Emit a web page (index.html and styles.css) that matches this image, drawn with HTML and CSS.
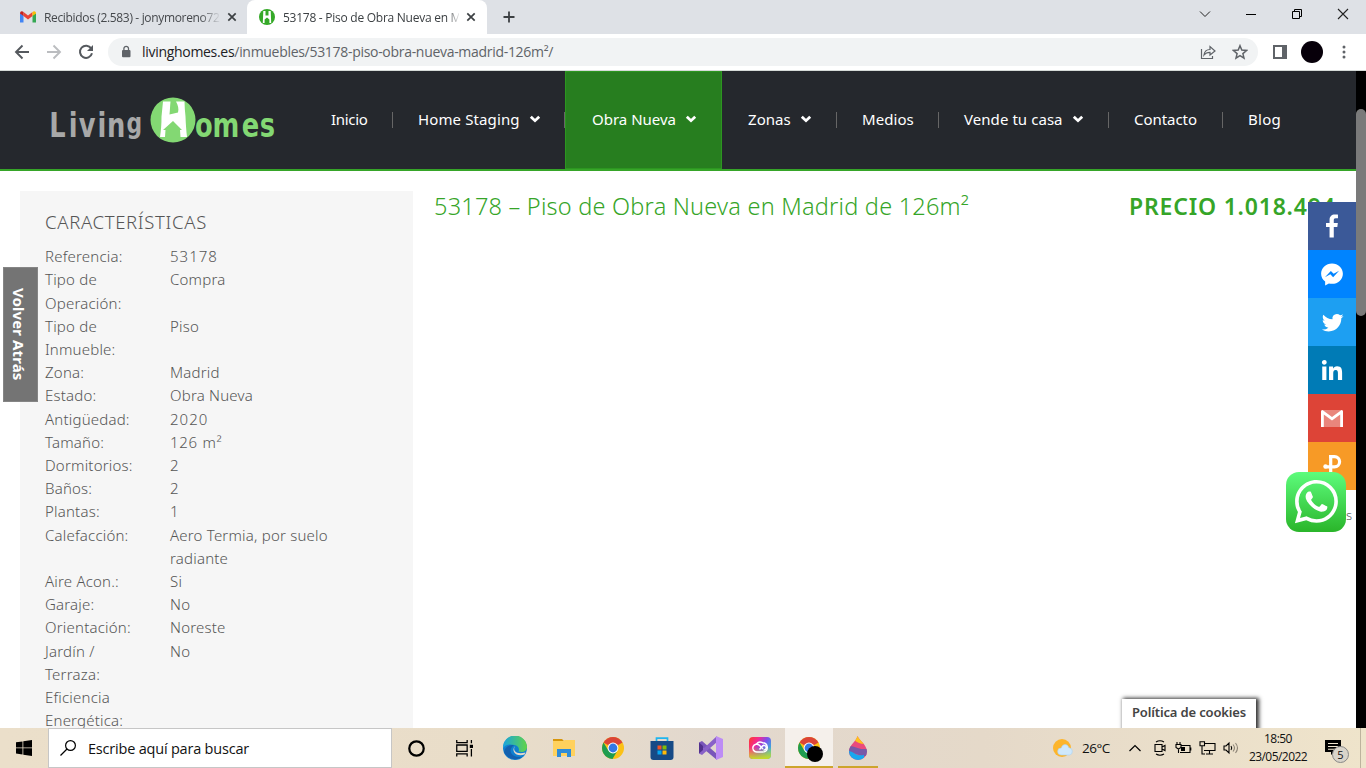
FILE: index.html
```html
<!DOCTYPE html>
<html lang="es">
<head>
<meta charset="utf-8">
<title>53178 - Piso de Obra Nueva en Madrid</title>
<link rel="stylesheet" href="styles.css">
</head>
<body>
<svg width="0" height="0" class="defs">
  <defs>
    <symbol id="x" viewBox="0 0 10 10"><path d="M1.3 1.3 8.7 8.7M8.7 1.3 1.3 8.7" stroke="#3c4043" stroke-width="1.7"/></symbol>
    <symbol id="caret" viewBox="0 0 12 8"><path d="M1.8 1.8 6 5.700l4.200-3.900" fill="none" stroke="#fff" stroke-width="2.8"/></symbol>
    <symbol id="chrome" viewBox="0 0 24 24">
      <circle cx="12" cy="12" r="11" fill="#fbc116"/>
      <path d="M12 12 2.500 6.500A11 11 0 0 1 21.500 6.500Z" fill="#db4437"/>
      <path d="M2.500 6.500A11 11 0 0 0 11.500 23L16.500 14.500 12 12 7.300 14.500Z" fill="#1e9c50"/>
      <circle cx="12" cy="12" r="5.400" fill="#fff"/><circle cx="12" cy="12" r="4.400" fill="#3478e5"/>
    </symbol>
  </defs>
</svg>
<header class="tabs">
  <div class="tab mail">
    <svg class="fav" viewBox="0 0 16 12"><path d="M0 2v9.500h3.500V4.600Z" fill="#4285f4"/><path d="M12.500 4.600v6.900H16V2Z" fill="#34a853"/><path d="M3.500 1v4L8 8.500 12.500 5V1L8 4.500Z" fill="#ea4335"/><path d="M0 2.500V1.500Q1.500-.5 3.500 1v4Z" fill="#c5221f"/><path d="M16 2.500v-1Q14.500-.5 12.500 1v4Z" fill="#fbbc04"/></svg>
    <span class="title">Recibidos (2.583) - jonymoreno72</span>
    <svg class="close"><use href="#x"/></svg>
  </div>
  <div class="tab current">
    <svg class="fav home" viewBox="0 0 16 16"><circle cx="8" cy="8" r="8" fill="#35a928"/><path d="M4.300 2h2.200v4.500h3V2h2.200l.5 12H10.400V10.500L8 8.500 5.600 10.500V14H3.800Z" fill="#fff"/></svg>
    <span class="title">53178 - Piso de Obra Nueva en M</span>
    <svg class="close"><use href="#x"/></svg>
  </div>
  <svg class="plus" viewBox="0 0 12 12"><path d="M6 .5v11M.5 6h11" stroke="#3c4043" stroke-width="1.800"/></svg>
  <div class="winctl">
    <svg viewBox="0 0 12 12"><path d="M1 3.500 6 8.500l5-5" fill="none" stroke="#222"/></svg>
    <svg viewBox="0 0 12 12"><path d="M1 6.500h10" stroke="#000"/></svg>
    <svg viewBox="0 0 12 12"><path d="M1.500 3.500h7v7h-7ZM3.500 3.500v-2h7v7h-2" fill="none" stroke="#000"/></svg>
    <svg viewBox="0 0 12 12"><path d="m1 1 10 10M11 1 1 11" stroke="#222" stroke-width="1.100"/></svg>
  </div>
</header>
<div class="toolbar">
  <svg class="tool" viewBox="0 0 16 16"><path d="M15 8H2.500M8.500 1.500 2 8l6.500 6.500" fill="none" stroke="#55595e" stroke-width="1.900"/></svg>
  <svg class="tool" viewBox="0 0 16 16"><path d="M1 8h12.500M7.500 1.500 14 8l-6.500 6.500" fill="none" stroke="#bbbdc0" stroke-width="1.900"/></svg>
  <svg class="tool" viewBox="0 0 16 16"><path d="M13.200 4.400A6.100 6.100 0 1 0 14 9.300" fill="none" stroke="#55595e" stroke-width="2"/><path d="M15 1v6H9Z" fill="#55595e"/></svg>
  <div class="address">
    <svg class="lock" viewBox="0 0 10 13"><rect x="1" y="5" width="8.500" height="7.300" rx="1" fill="#5f6368"/><path d="M2.900 5V3.600a2.300 2.300 0 0 1 4.600 0V5" fill="none" stroke="#5f6368" stroke-width="1.300"/></svg>
    <span class="url"><b>livinghomes.es</b>/inmuebles/53178-piso-obra-nueva-madrid-126m²/</span>
    <svg class="share" viewBox="0 0 16 16"><path d="M1.500 5v9.500h11V12M4 11c.5-4 3-5.500 6-5.500V2.500l5 4.500-5 4V8.300C7.500 8.300 5.500 9 4 11Z" fill="none" stroke="#5f6368" stroke-width="1.200"/></svg>
    <svg class="star" viewBox="0 0 16 16"><path d="m8 1.700 1.800 4.400 4.700.4-3.600 3.100 1.100 4.600L8 11.700l-4 2.500 1.100-4.600L1.500 6.500l4.700-.4Z" fill="none" stroke="#5f6368" stroke-width="1.500"/></svg>
  </div>
  <svg class="panel" viewBox="0 0 14 14"><path d="M1 1h12v12H1Z" fill="#fff" stroke="#5f6368" stroke-width="2"/><path d="M9 0h5v14H9Z" fill="#5f6368"/></svg>
  <i class="avatar"></i>
  <svg class="dots" viewBox="0 0 4 14"><g fill="#5f6368"><circle cx="2" cy="2" r="1.500"/><circle cx="2" cy="7" r="1.500"/><circle cx="2" cy="12" r="1.500"/></g></svg>
</div>
<div class="view">
  <div class="page">
    <div class="masthead">
      <svg class="logo" viewBox="0 0 230 50">
        <text class="word grey" transform="translate(0 42) scale(.78 1)" x="-1 24 37 61 73 98">Livin<tspan dy="-4" class="gee">g</tspan></text>
        <circle cx="123" cy="25" r="22.500" fill="#83d873"/>
        <path d="M113 6.500h7.500c-.5 5-.5 8-1 13l8.500-2c1-4 0-7-2-11h8.500c0 5 .5 10 1 15 .3 8 .8 14 1.500 20.500h-6.500l-.5-7h2L123 26l-10 9h2.500l-.5 7H110c1-6.500 1.500-12.500 1.500-20.500Z" fill="#fff"/>
        <text class="word green" transform="translate(145 42) scale(.78 1)" x="0 22.500 60 83">omes</text>
      </svg>
      <nav>
        <a class="n1"><span>Inicio</span></a>
        <a class="n2"><span>Home Staging</span><svg><use href="#caret"/></svg></a>
        <a class="n3 active"><span>Obra Nueva</span><svg><use href="#caret"/></svg></a>
        <a class="n4"><span>Zonas</span><svg><use href="#caret"/></svg></a>
        <a class="n5"><span>Medios</span></a>
        <a class="n6"><span>Vende tu casa</span><svg><use href="#caret"/></svg></a>
        <a class="n7"><span>Contacto</span></a>
        <a class="n8"><span>Blog</span></a>
      </nav>
    </div>
    <main>
      <aside>
        <h2>CARACTERÍSTICAS</h2>
        <dl>
          <dt>Referencia:</dt><dd class="num">53178</dd>
          <dt>Tipo de<br>Operación:</dt><dd>Compra</dd>
          <dt>Tipo de<br>Inmueble:</dt><dd>Piso</dd>
          <dt>Zona:</dt><dd>Madrid</dd>
          <dt>Estado:</dt><dd>Obra Nueva</dd>
          <dt>Antigüedad:</dt><dd class="num">2020</dd>
          <dt>Tamaño:</dt><dd class="size">126 m²</dd>
          <dt>Dormitorios:</dt><dd>2</dd>
          <dt>Baños:</dt><dd>2</dd>
          <dt>Plantas:</dt><dd>1</dd>
          <dt>Calefacción:</dt><dd>Aero Termia, por suelo<br>radiante</dd>
          <dt>Aire Acon.:</dt><dd>Si</dd>
          <dt>Garaje:</dt><dd>No</dd>
          <dt>Orientación:</dt><dd>Noreste</dd>
          <dt>Jardín /<br>Terraza:</dt><dd>No</dd>
          <dt>Eficiencia<br>Energética:</dt><dd></dd>
        </dl>
      </aside>
      <h1>53178 – Piso de Obra Nueva en Madrid de 126m²</h1>
      <strong class="price">PRECIO 1.018.494</strong>
    </main>
    <div class="back">Volver Atrás</div>
    <div class="social">
      <svg class="fb" viewBox="0 0 32 32"><path d="M17.780 27.500V17.008h3.522l.527-4.090h-4.050v-2.610c0-1.182.33-1.990 2.023-1.990h2.166V4.660c-.375-.05-1.660-.16-3.155-.16-3.123 0-5.260 1.905-5.260 5.405v3.016h-3.530v4.090h3.530V27.500h4.223z"/></svg>
      <svg class="ms" viewBox="0 .5 32 32"><path transform="translate(0 1)" d="M16 5C9.986 5 5.110 9.560 5.110 15.182c0 3.200 1.580 6.054 4.046 7.920V27l3.716-2.060c.99.276 2.040.425 3.128.425 6.014 0 10.890-4.560 10.890-10.183S22.013 5 16 5zm1.147 13.655L14.330 15.730l-5.423 3 5.946-6.310 2.816 2.925 5.420-3-5.946 6.310z"/></svg>
      <svg class="tw" viewBox="-2.500 -2.500 35.500 35.500"><path d="M28 8.557a9.913 9.913 0 0 1-2.828.775 4.930 4.930 0 0 0 2.166-2.725 9.738 9.738 0 0 1-3.130 1.194 4.920 4.920 0 0 0-3.593-1.550 4.924 4.924 0 0 0-4.794 6.049c-4.090-.21-7.720-2.170-10.150-5.150a4.942 4.942 0 0 0-.665 2.477c0 1.710.87 3.214 2.190 4.100a4.968 4.968 0 0 1-2.230-.616v.06c0 2.390 1.700 4.380 3.952 4.830-.414.115-.85.174-1.297.174-.318 0-.626-.03-.928-.086a4.935 4.935 0 0 0 4.600 3.420 9.893 9.893 0 0 1-6.114 2.107c-.398 0-.79-.023-1.175-.068a13.953 13.953 0 0 0 7.550 2.213c9.056 0 14.010-7.507 14.010-14.013 0-.213-.005-.426-.015-.637.96-.695 1.795-1.560 2.455-2.550z"/></svg>
      <svg class="li" viewBox="0 0 32 32"><path d="M6.227 12.610h4.190v13.480h-4.190V12.610zm2.095-6.700a2.430 2.430 0 0 1 0 4.860c-1.344 0-2.428-1.090-2.428-2.430s1.084-2.430 2.428-2.430m4.720 6.700h4.020v1.840h.058c.56-1.058 1.927-2.176 3.965-2.176 4.238 0 5.020 2.792 5.020 6.420v7.395h-4.183v-6.560c0-1.564-.03-3.574-2.178-3.574-2.180 0-2.514 1.700-2.514 3.460v6.668h-4.187V12.610z"/></svg>
      <svg class="gm" viewBox="0 0 32 32"><path d="M5.500 8h21v17h-21Z" opacity=".35"/><path d="M5 9.500Q5 8 6.500 8L16 15 25.500 8Q27 8 27 9.500V25h-2.800V12.500L16 18.500 7.800 12.500V25H5Z"/></svg>
      <svg class="pf" viewBox="0 0 32 32"><path d="M13 6.600h5.500a5 5 0 0 1 0 10.200H8.500M14.700 6v16" fill="none" stroke="#fff" stroke-width="3.200"/><circle cx="9.500" cy="16.400" r="2.200"/></svg>
    </div>
    <span class="tail">s</span>
    <svg class="whats" viewBox="0 0 60 60">
      <defs><linearGradient id="wg" x2="0" y2="1"><stop stop-color="#5dfc7c"/><stop offset="1" stop-color="#2ab52a"/></linearGradient></defs>
      <rect width="60" height="60" rx="13" fill="url(#wg)"/>
      <path transform="translate(8.800 8) scale(1.800)" fill="#fff" d="M17.472 14.382c-.297-.149-1.758-.867-2.030-.967-.273-.099-.471-.148-.67.15-.197.297-.767.966-.94 1.164-.173.199-.347.223-.644.075-.297-.15-1.255-.463-2.390-1.475-.883-.788-1.480-1.761-1.653-2.059-.173-.297-.018-.458.13-.606.134-.133.298-.347.446-.52.149-.174.198-.298.298-.497.099-.198.05-.371-.025-.52-.075-.149-.669-1.612-.916-2.207-.242-.579-.487-.5-.669-.51-.173-.008-.371-.01-.57-.01-.198 0-.52.074-.792.372-.272.297-1.040 1.016-1.040 2.479 0 1.462 1.065 2.875 1.213 3.074.149.198 2.096 3.200 5.077 4.487.709.306 1.262.489 1.694.625.712.227 1.360.195 1.871.118.571-.085 1.758-.719 2.006-1.413.248-.694.248-1.289.173-1.413-.074-.124-.272-.198-.57-.347m-5.421 7.403h-.004a9.870 9.870 0 01-5.031-1.378l-.361-.214-3.741.982.998-3.648-.235-.374a9.860 9.860 0 01-1.510-5.260c.001-5.450 4.436-9.884 9.888-9.884 2.640 0 5.122 1.030 6.988 2.898a9.825 9.825 0 012.893 6.994c-.003 5.450-4.437 9.884-9.885 9.884m8.413-18.297A11.815 11.815 0 0012.050 0C5.495 0 .16 5.335.157 11.892c0 2.096.547 4.142 1.588 5.945L.057 24l6.305-1.654a11.882 11.882 0 005.683 1.448h.005c6.554 0 11.890-5.335 11.893-11.893a11.821 11.821 0 00-3.480-8.413z"/>
    </svg>
    <div class="cookies">Política de cookies</div>
  </div>
  <div class="scroll"><i></i></div>
</div>
<footer class="taskbar">
  <div class="start"><svg viewBox="0 0 16 16"><path d="M0 2.300 6.500 1.400v6.100H0ZM7.300 1.200 16 0v7.500H7.300ZM0 8.300h6.500v6.200L0 13.600ZM7.300 8.300H16V16l-8.700-1.300Z"/></svg></div>
  <div class="search"><svg viewBox="0 0 16 16"><g fill="none" stroke="#000" stroke-width="1.200"><circle cx="10.500" cy="5.500" r="4.900"/><path d="M7 9 .5 15.500"/></g></svg><span>Escribe aquí para buscar</span></div>
  <div class="cell"><svg class="s16" viewBox="0 0 16 16"><circle cx="8" cy="8" r="6.800" fill="none" stroke="#000" stroke-width="2.100"/></svg></div>
  <div class="cell"><svg class="s16" viewBox="0 0 16 16"><path d="M.7 0v2.500h9.800V0M.7 15.500V13h9.800v2.500M.7 4.700h9.800v6H.7ZM14.500 0v3M14.500 8.500v7" fill="none" stroke="#000" stroke-width="1.200"/><path d="M13 4.500h3v3h-3Z"/></svg></div>
  <div class="cell app first"><svg viewBox="0 0 24 24">
    <defs><linearGradient id="eg" x1="0" x2="1"><stop stop-color="#18a3df"/><stop offset="1" stop-color="#61d447"/></linearGradient></defs>
    <circle cx="12" cy="12" r="12" fill="#0f7fd0"/><path d="M0 12A12 12 0 0 1 24 11c0 4-4 6-8.500 4.500 1.500-3.500-1-6-4-6.500C6 7.500 2 9 0 12Z" fill="url(#eg)"/><path d="M9 11c-4 5 1 11 10 10A12 12 0 0 1 1 16c1-5 4-7 10-7Z" fill="#1360ae"/><path d="M12 10c-3 5 2 9 10.500 6.500L21.500 18.500c-8 3-14-3.500-9.500-8.500Z" fill="#e5dacb"/></svg></div>
  <div class="cell app"><svg viewBox="0 0 24 24"><path d="M1 3h9l2 2H1Z" fill="#d7960b"/><path d="M1 5h10l2-1h10v16H1Z" fill="#ffd15d"/><path d="M5 21v-8h14v8h-4v-4H9v4Z" fill="#2f8cd8"/></svg></div>
  <div class="cell app"><svg viewBox="0 0 24 24"><use href="#chrome"/></svg></div>
  <div class="cell app"><svg viewBox="0 0 24 24"><path d="M6.500 7V2.200h11V7" fill="none" stroke="#1fb5ee" stroke-width="1.700"/><path d="M.5 5h23v16q0 3-3 3h-17q-3 0-3-3Z" fill="#164a86"/><path d="M7.500 9.500h4v4h-4Z" fill="#f35325"/><path d="M12.500 9.500h4v4h-4Z" fill="#81bc06"/><path d="M7.500 14.500h4v4h-4Z" fill="#05a6f0"/><path d="M12.500 14.500h4v4h-4Z" fill="#ffba08"/></svg></div>
  <div class="cell app"><svg viewBox="0 0 24 24"><path d="M0 6.500 3 5l15 13v6L0 9Z" fill="#7956ba"/><path d="M0 6.500v11L3 19 18 6V0L4.500 12.500Z" fill="#8961c8"/><path d="M0 6.500v11L4 14V10Z" fill="#52318e"/><path d="m17 0 7 3v18l-7 3Z" fill="#bd8cf5"/></svg></div>
  <div class="cell app"><svg viewBox="0 0 24 24"><defs><linearGradient id="cc" x2="1" y2=".6"><stop stop-color="#ff3c26"/><stop offset=".35" stop-color="#f32992"/><stop offset=".65" stop-color="#7950ef"/><stop offset="1" stop-color="#30bdd5"/></linearGradient><linearGradient id="cb" x2="0" y2="1"><stop offset=".45" stop-color="#ffd200" stop-opacity="0"/><stop offset="1" stop-color="#c6dc24"/></linearGradient></defs><rect x="1" y="1" width="22" height="22" rx="4" fill="url(#cc)"/><rect x="1" y="1" width="22" height="22" rx="4" fill="url(#cb)"/><g fill="none" stroke="#fff" stroke-width="1.500"><path d="M15.500 16H8.700a3.900 3.900 0 1 1 2.700-6.700L15 13"/><path d="M8.500 8A4.600 4.600 0 0 1 14.500 6.700a4.700 4.700 0 0 1 1 9.300"/><path d="M11.500 13.500 14 10.500a2.300 2.300 0 1 1 1.500 3.500"/></g></svg></div>
  <div class="cell run lit"><svg viewBox="0 0 24 24"><use href="#chrome"/></svg><i></i></div>
  <div class="cell run drop"><svg viewBox="0 0 24 24"><defs><clipPath id="dp"><path d="M11.500 0C13 4 21 9 21 15.500a9 8.500 0 0 1-18 0C3 9 10 6 11.500 0Z"/></clipPath></defs><g clip-path="url(#dp)"><path d="M0 0h24v24H0Z" fill="#ea4b7d"/><path d="M8 0h10v8q-5 0-10-4Z" fill="#ffc21a"/><path d="M0 11c8-4 11 5 24 1v8c-12 2-12-5-24-2Z" fill="#7859a8"/><path d="M0 15c8-1 9 6 18 4v6H0Z" fill="#16a8ef"/></g></svg></div>
  <div class="tray">
    <svg class="weather" viewBox="0 0 20 20"><circle cx="9" cy="10" r="9" fill="#fdb52b"/><path d="M8 17a3.500 3.500 0 0 1 .3-7c1-4.500 6.500-4.500 7.500-.3A3.700 3.700 0 0 1 16.500 17Z" fill="#cfe8fb" stroke="#a9d2f3" stroke-width=".6"/></svg>
    <span class="temp">26°C</span>
    <svg class="chev" viewBox="0 0 12 8"><path d="m.5 7 5.500-5.500L11.500 7" fill="none" stroke="#000" stroke-width="1.200"/></svg>
    <svg class="i1" viewBox="0 0 12 16"><g fill="none" stroke="#000" stroke-width="1.100"><path d="M2 2Q6-.5 10 2M2 14q4 2.500 8 0M1 4.500h7v7H1ZM8 7l3-1.500v5L8 9"/></g></svg>
    <svg class="i2" viewBox="0 0 17 12"><g fill="none" stroke="#000" stroke-width="1.100"><path d="M6 3.500h9v7H5M1 2.500h5v3L3.500 7 1 5.500ZM2 0v2.500M5 0v2.500M3.500 7v4M15.800 5.500v3"/></g><path d="M6 5h4v4H6Z"/></svg>
    <svg class="i3" viewBox="0 0 17 14"><path d="M5 2.500h11v7H5M10.500 9.500V13M7 13h7M1 .7h4.500v4H1ZM3 4.700V13h3" fill="none" stroke="#000" stroke-width="1.100"/></svg>
    <svg class="i4" viewBox="0 0 17 14"><g fill="none" stroke="#000" stroke-width="1.100"><path d="M1 5h2l3-3v10L3 9H1ZM8 5q1.500 2 0 4"/><path d="M10 3.500q3 3.500 0 7M12.500 2q4 5 0 10" stroke="#8d8577"/></g></svg>
    <div class="clock"><span>18:50</span><span>23/05/2022</span></div>
    <div class="notes"><svg viewBox="0 0 16 16"><path d="M0 0h16v12H9l-3 3v-3H0Z"/><path d="M3 3.500h10M3 6.500h10M3 9.300h7" stroke="#efe5cf" stroke-width="1.100"/></svg><b>5</b></div>
    <i class="peek"></i>
  </div>
</footer>
</body>
</html>
```
FILE: styles.css
```css
* { box-sizing: border-box; }
body { margin: 0; width: 1366px; height: 768px; overflow: hidden; display: flex; flex-direction: column; background: #fff; font-family: "Noto Sans", sans-serif; }
svg { display: block; flex: none; }
.defs { position: absolute; }

/* browser tabs */
.tabs { height: 34px; background: #dee1e6; display: flex; align-items: center; flex: none; font: 12px "Open Sans", sans-serif; color: #45484c; }
.tab { height: 34px; display: flex; align-items: center; }
.mail { width: 247px; padding-left: 20px; }
.current { width: 240px; padding-left: 12px; background: #fff; border-radius: 8px 8px 0 0; color: #3c4043; }
.fav { width: 16px; height: 12px; margin-right: 8px; }
.home { height: 16px; }
.title { width: 177px; overflow: hidden; white-space: nowrap; letter-spacing: -.34px; -webkit-mask-image: linear-gradient(90deg, #000 88%, transparent); }
.current .title { width: 176px; letter-spacing: -.26px; -webkit-mask-image: linear-gradient(90deg, #000 93%, transparent 101%); }
.close { width: 10px; height: 10px; margin-left: 6px; }
.current .close { margin-left: 7px; }
.plus { width: 12px; height: 12px; margin-left: 16px; }
.winctl { margin-left: auto; display: flex; gap: 34px; padding-right: 17px; margin-top: -6px; }
.winctl svg { width: 12px; height: 12px; }

/* address bar */
.toolbar { height: 37px; flex: none; display: flex; align-items: center; padding: 0 0 1px 14px; border-bottom: 1px solid #d5dad7; }
.tool { width: 16px; height: 16px; margin-right: 16px; }
.address { width: 1150px; height: 28px; border-radius: 14px; background: #f1f3f4; display: flex; align-items: center; padding: 0 10px 0 12px; margin-left: -2px; }
.lock { width: 10px; height: 13px; margin: 0 11px 0 1px; }
.url { flex: 1; font: 14px "Open Sans", sans-serif; letter-spacing: -.3px; color: #5f6368; }
.url b { font-weight: 400; color: #202124; }
.share, .star { width: 16px; height: 16px; }
.star { margin-left: 16px; }
.panel { width: 14px; height: 14px; margin-left: 15px; }
.avatar { width: 22px; height: 22px; border-radius: 50%; background: #07000a; margin-left: 14px; }
.dots { width: 4px; height: 14px; margin-left: 19px; }

/* site */
.view { height: 657px; flex: none; display: flex; background: #000; }
.page { width: 1356px; height: 657px; overflow: hidden; background: #fff; position: relative; }
.scroll { width: 10px; padding-top: 38px; }
.scroll i { display: block; height: 207px; background: #7a7a7a; border-radius: 5px; }
.masthead { height: 100px; background: #25282d; border-bottom: 2px solid #36a528; display: flex; }
.logo { width: 230px; height: 50px; margin: 24px 25px 0 50px; }
.word { font: bold 33px "DejaVu Sans", sans-serif; }
.gee { font-size: 28px; }
.grey { fill: #a8a8a8; }
.green { fill: #83d873; }
nav { display: flex; height: 98px; }
nav a { display: flex; align-items: center; padding-left: 26px; padding-bottom: 2px; height: 98px; color: #fff; font-size: 15px; letter-spacing: .06px; white-space: nowrap; background: linear-gradient(#666, #666) 100% 50% / 1px 16px no-repeat; }
nav a svg { width: 12px; height: 8px; margin-left: 9px; }
.n1 { width: 88px; letter-spacing: -.3px; }
.n2 { width: 172px; padding-left: 25px; letter-spacing: .12px; }
.n3 { width: 157px; }
.n4 { width: 115px; }
.n5 { width: 102px; padding-left: 25px; }
.n6 { width: 170px; padding-left: 25px; }
.n7 { width: 114px; padding-left: 25px; letter-spacing: -.05px; }
.n8 { width: 85px; padding-left: 25px; background: none; letter-spacing: .3px; }
nav .active { background: #277e1f; border: 1px solid #2c9620; padding-left: 26px; letter-spacing: 0; }
main { display: flex; align-items: flex-start; padding: 20px 0 0 20px; }
aside { width: 393px; height: 560px; background: #f6f6f6; padding: 19px 25px 0; margin-right: 21px; }
h2 { margin: 0 0 11.200px; font-size: 18.500px; line-height: 24px; font-weight: 300; color: #555; letter-spacing: .68px; }
dl { margin: 0; display: grid; grid-template-columns: 125px 1fr; font-size: 15px; line-height: 23.200px; font-weight: 300; white-space: nowrap; color: #555; letter-spacing: .2px; }
dd { margin: 0; }
.num { letter-spacing: 1px; }
.size { letter-spacing: .7px; }
h1 { margin: -1px 0 0; width: 695px; font-size: 23.500px; line-height: 32px; font-weight: 300; color: #36a528; white-space: nowrap; letter-spacing: .22px; }
.price { margin-top: -1px; font-size: 23px; line-height: 32px; font-weight: 600; color: #36a528; white-space: nowrap; letter-spacing: .8px; }
.back { position: absolute; left: 3px; top: 196px; width: 35px; height: 135px; background: #747474; border: 1px solid #858585; color: #fff; font-weight: 700; font-size: 15px; letter-spacing: .1px; line-height: 37px; text-align: center; writing-mode: vertical-rl; }
.social { position: absolute; left: 1308px; top: 131px; width: 48px; }
.social svg { width: 48px; height: 48px; padding: 8px; fill: #fff; }
.fb { background: #3b5998; }
.ms { background: #0084ff; }
.tw { background: #1d9ff2; }
.li { background: #007bb6; }
.gm { background: #dd4437; }
.pf { background: #f79a26; }
.tail { position: absolute; left: 1346px; top: 435px; font-size: 13px; font-weight: 300; color: #555; }
.whats { position: absolute; left: 1286px; top: 401px; width: 60px; height: 60px; }
.cookies { position: absolute; left: 1122px; top: 628px; width: 134px; height: 40px; background: #fff; box-shadow: 2px 0 4px 1px #333; font-size: 13px; font-weight: 600; line-height: 27px; letter-spacing: -.15px; color: #444; text-align: center; white-space: nowrap; }

/* taskbar */
.taskbar { height: 40px; flex: none; display: flex; position: relative; background: linear-gradient(90deg, #ebdfca, #e9ddc9 36%, #e2d8ce 52%, #e5d9c9 72%, #efe4cb); font-family: "Open Sans", sans-serif; color: #111; }
.start { width: 48px; padding: 12px 16px; }
.start svg { width: 16px; height: 16px; }
.search { width: 344px; background: #fff; border: 1px solid #c6c6c6; display: flex; align-items: center; gap: 12px; padding-left: 11px; font-size: 14.500px; letter-spacing: -.2px; }
.search svg { width: 16px; height: 16px; }
.cell { width: 48px; display: flex; align-items: center; justify-content: center; }
.s16 { width: 17px; height: 17px; }
.app { width: 49px; }
.app svg, .run svg { width: 24px; height: 24px; }
.first { margin-left: 2px; }
.run { border-bottom: 2px solid #cda52c; padding-top: 2px; }
.lit { background: #f5f0eb; position: relative; margin-left: 1px; }
.lit i { position: absolute; left: 22px; top: 18px; width: 16px; height: 16px; border-radius: 50%; background: #000; }
.drop { width: 40px; margin-left: 5px; }
.tray { margin-left: auto; width: 313px; display: flex; align-items: center; font-size: 12px; }
.weather { width: 20px; height: 20px; }
.temp { font-size: 13.500px; margin-left: 9px; width: 37px; letter-spacing: -.5px; }
.chev { width: 12px; height: 8px; margin-left: 10px; }
.i1 { width: 12px; height: 16px; margin-left: 13px; }
.i2 { width: 17px; height: 12px; margin-left: 9px; }
.i3 { width: 17px; height: 14px; margin-left: 7px; }
.i4 { width: 17px; height: 14px; margin-left: 7px; }
.clock { width: 66px; margin-left: 5px; display: flex; flex-direction: column; align-items: center; line-height: 18px; letter-spacing: -.55px; margin-top: -1px; }
.notes { position: relative; margin-left: 14px; }
.notes svg { width: 16px; height: 16px; }
.notes b { position: absolute; left: 7px; top: 6px; width: 17px; height: 17px; border: 1px solid #888; border-radius: 50%; background: #d9d4ca; font-weight: 400; font-size: 11px; line-height: 15px; text-align: center; }
.peek { width: 1px; height: 40px; background: #bdb39d; margin-left: 19px; }
```
